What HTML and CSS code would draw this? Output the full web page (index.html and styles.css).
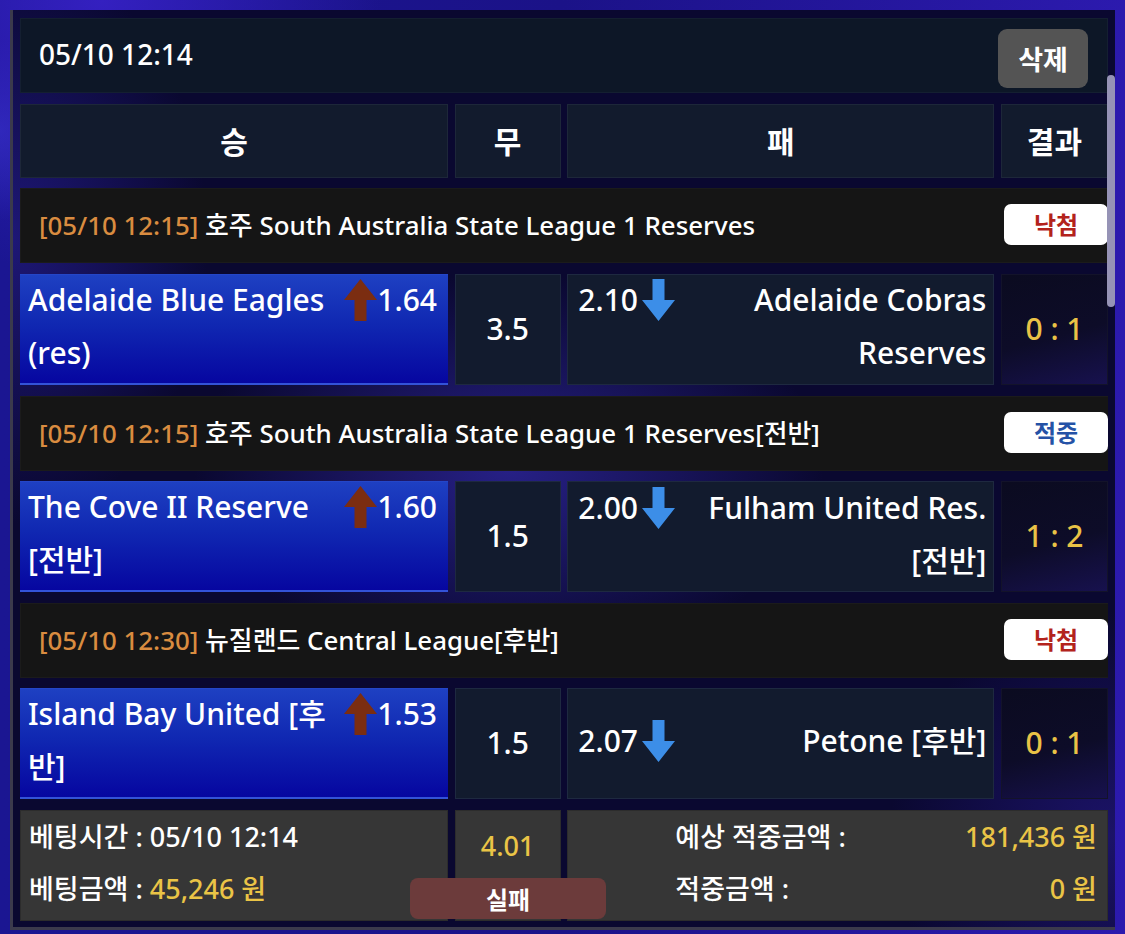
FILE: index.html
```html
<!DOCTYPE html>
<html lang="ko">
<head>
<meta charset="utf-8">
<title>Bet slip</title>
<link rel="stylesheet" href="styles.css">
</head>
<body>
<div class="panel">
  <div class="board">
    <div class="topbar">
      <span class="top-date">05/10 12:14</span>
      <button class="del-btn">삭제</button>
    </div>

    <div class="colhead">승</div>
    <div class="colhead">무</div>
    <div class="colhead">패</div>
    <div class="colhead">결과</div>

    <div class="league">
      <span class="league-text"><span class="league-time">[05/10 12:15]</span> 호주 South Australia State League 1 Reserves</span>
      <span class="badge lose">낙첨</span>
    </div>
    <div class="cell home">
      <p class="team"><span class="odds odds-up"><svg class="arrow" viewBox="0 0 33 42"><polygon points="16.5,0 33,21 22.5,21 22.5,42 10.5,42 10.5,21 0,21"/></svg>1.64</span>Adelaide Blue Eagles (res)</p>
    </div>
    <div class="cell draw">3.5</div>
    <div class="cell away">
      <p class="team"><span class="odds odds-down">2.10<svg class="arrow" viewBox="0 0 33 42"><polygon points="10.5,0 22.5,0 22.5,21 33,21 16.5,42 0,21 10.5,21"/></svg></span>Adelaide Cobras Reserves</p>
    </div>
    <div class="cell result">0 : 1</div>

    <div class="league">
      <span class="league-text"><span class="league-time">[05/10 12:15]</span> 호주 South Australia State League 1 Reserves[전반]</span>
      <span class="badge win">적중</span>
    </div>
    <div class="cell home">
      <p class="team"><span class="odds odds-up"><svg class="arrow" viewBox="0 0 33 42"><polygon points="16.5,0 33,21 22.5,21 22.5,42 10.5,42 10.5,21 0,21"/></svg>1.60</span>The Cove II Reserve [전반]</p>
    </div>
    <div class="cell draw">1.5</div>
    <div class="cell away">
      <p class="team"><span class="odds odds-down">2.00<svg class="arrow" viewBox="0 0 33 42"><polygon points="10.5,0 22.5,0 22.5,21 33,21 16.5,42 0,21 10.5,21"/></svg></span>Fulham United Res. [전반]</p>
    </div>
    <div class="cell result">1 : 2</div>

    <div class="league">
      <span class="league-text"><span class="league-time">[05/10 12:30]</span> 뉴질랜드 Central League[후반]</span>
      <span class="badge lose">낙첨</span>
    </div>
    <div class="cell home">
      <p class="team"><span class="odds odds-up"><svg class="arrow" viewBox="0 0 33 42"><polygon points="16.5,0 33,21 22.5,21 22.5,42 10.5,42 10.5,21 0,21"/></svg>1.53</span>Island Bay United [후반]</p>
    </div>
    <div class="cell draw">1.5</div>
    <div class="cell away">
      <p class="team"><span class="odds odds-down">2.07<svg class="arrow" viewBox="0 0 33 42"><polygon points="10.5,0 22.5,0 22.5,21 33,21 16.5,42 0,21 10.5,21"/></svg></span>Petone [후반]</p>
    </div>
    <div class="cell result">0 : 1</div>

    <div class="foot foot-left">
      <p>베팅시간 : 05/10 12:14</p>
      <p>베팅금액 : <span class="yel">45,246 원</span></p>
      <button class="fail-btn">실패</button>
    </div>
    <div class="foot foot-mid"><span class="yel">4.01</span></div>
    <div class="foot foot-right">
      <div class="frow"><span>예상 적중금액 :</span><span class="yel">181,436 원</span></div>
      <div class="frow"><span>적중금액 :</span><span class="yel">0 원</span></div>
    </div>
  </div>
  <div class="scroll-thumb"></div>
</div>
</body>
</html>
```

FILE: styles.css
```css
* {
  box-sizing: border-box;
  margin: 0;
  padding: 0;
}

html, body {
  width: 1125px;
  height: 934px;
  overflow: hidden;
}

body {
  padding: 10px 10px 0 10px;
  font-family: "Noto Sans", "Noto Sans CJK KR", sans-serif;
  font-weight: 500;
  color: #ffffff;
  background:
    radial-gradient(circle at 9% 0%, #3420c0 0, rgba(52, 32, 192, 0) 280px),
    radial-gradient(circle at 0% 14%, #2d2db8 0, rgba(45, 45, 184, 0) 90px),
    linear-gradient(90deg, #1b1692 0%, #1b1288 50%, #2c1aae 100%);
}

.panel {
  position: relative;
  width: 1105px;
  height: 920px;
  border-left: 3px solid #3b3a4c;
  border-bottom: 3px solid #3b3a4c;
  padding: 8px 7px 0 7px;
  background:
    radial-gradient(ellipse 420px 260px at 45% 50%, rgba(62, 52, 205, 0.55), rgba(62, 52, 205, 0) 75%),
    radial-gradient(ellipse 260px 380px at 0% 25%, rgba(45, 35, 175, 0.55), rgba(45, 35, 175, 0) 75%),
    radial-gradient(ellipse 300px 300px at 100% 90%, rgba(45, 30, 160, 0.5), rgba(45, 30, 160, 0) 75%),
    #0a0830;
}

.board {
  display: grid;
  grid-template-columns: 428px 106px 427px 107px;
  grid-template-rows: 75px 74px 75px 111px 75px 111px 75px 111px 111px;
  column-gap: 6.67px;
  row-gap: 10.625px;
}

/* top bar */
.topbar {
  grid-column: 1 / -1;
  display: flex;
  justify-content: space-between;
  align-items: center;
  padding: 0 19px 0 18px;
  background: #0d1727;
  border: 1px solid #141f31;
}

.top-date {
  font-size: 28px;
  margin-bottom: 3px;
}

.del-btn {
  align-self: flex-end;
  margin-bottom: 4px;
  width: 90px;
  height: 59px;
  border: none;
  border-radius: 9px;
  background: #545454;
  color: #ffffff;
  font-family: "Noto Sans CJK KR", sans-serif;
  font-size: 27px;
  font-weight: 700;
}

/* column headings */
.colhead {
  display: flex;
  justify-content: center;
  align-items: center;
  background: #121b2d;
  border: 1px solid #1d2739;
  font-family: "Noto Sans CJK KR", sans-serif;
  font-size: 30px;
  font-weight: 700;
  padding-bottom: 2px;
}

/* league line */
.league {
  grid-column: 1 / -1;
  display: flex;
  justify-content: space-between;
  align-items: center;
  padding-left: 18px;
  background: #151515;
  border: 1px solid #1b1b1b;
  border-right: none;
}

.league-text {
  font-size: 25.9px;
  padding-bottom: 3px;
}

.league-time {
  color: #d98c40;
}

.badge {
  display: flex;
  justify-content: center;
  align-items: center;
  width: 104px;
  height: 41px;
  margin-bottom: 2px;
  background: #ffffff;
  border-radius: 7px;
  font-family: "Noto Sans CJK KR", sans-serif;
  font-size: 24px;
  font-weight: 700;
  padding-bottom: 2px;
}

.badge.lose {
  color: #b3231c;
}

.badge.win {
  color: #2552a6;
}

/* match cells */
.cell {
  display: flex;
  align-items: center;
  font-size: 30px;
}

.team {
  width: 100%;
  font-size: 30px;
  line-height: 53px;
}

.home {
  padding: 0 11px 6px 8px;
  background: linear-gradient(180deg, #1e40c2 0%, #1028b2 45%, #0606a0 100%);
  border-top: 1px solid #2446c8;
  border-bottom: 2px solid #3353d8;
}

.odds {
  white-space: nowrap;
}

.odds-up {
  float: right;
}

.odds-down {
  float: left;
  margin-right: 14px;
}

.arrow {
  width: 33px;
  height: 42px;
  vertical-align: -10px;
}

.odds-up .arrow {
  fill: #7b2d11;
}

.odds-down .arrow {
  fill: #3c8ee8;
  margin-left: 4px;
}

.draw {
  justify-content: center;
  background: #121b2e;
  border: 1px solid #1e2940;
  padding-bottom: 2px;
}

.away {
  padding: 0 7px 6px 10px;
  background: #121b2e;
  border: 1px solid #1e2940;
}

.away .team {
  text-align: right;
}

.result {
  justify-content: center;
  color: #e9c246;
  background: linear-gradient(165deg, #0b0b20 0%, #0d0c28 55%, #17114e 100%);
  border: 1px solid #13132a;
  padding-bottom: 2px;
}

/* footer */
.foot {
  background: #363636;
  border: 1px solid #2c2c2c;
  font-size: 27px;
  line-height: 52px;
}

.foot-left {
  position: relative;
  padding: 0 0 0 8px;
}

.foot-mid {
  display: flex;
  justify-content: center;
  align-items: flex-start;
  padding-top: 9px;
}

.foot-right {
  grid-column: 3 / 5;
  padding: 0 10px 0 107px;
}

.frow {
  display: flex;
  justify-content: space-between;
}

.yel {
  color: #eac446;
}

.fail-btn {
  position: absolute;
  left: 389px;
  top: 67px;
  width: 196px;
  height: 41px;
  border: none;
  border-radius: 8px;
  background: #6c3b3b;
  color: #ffffff;
  font-family: "Noto Sans CJK KR", sans-serif;
  font-size: 24px;
  font-weight: 700;
  line-height: 41px;
}

.scroll-thumb {
  position: absolute;
  left: 1094px;
  top: 65px;
  width: 8px;
  height: 232px;
  border-radius: 4px;
  background: #9693b6;
}
```
